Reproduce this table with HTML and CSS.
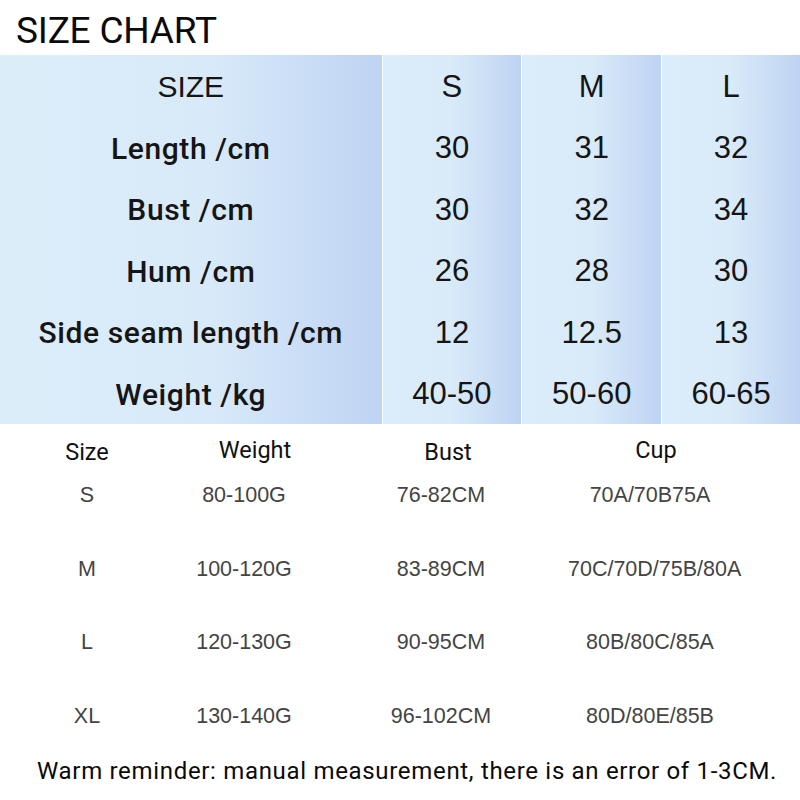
FILE: index.html
```html
<!DOCTYPE html>
<html>
<head>
<meta charset="utf-8">
<link rel="stylesheet" href="styles.css">
</head>
<body>
<div class="page">
  <h1 class="title">SIZE CHART</h1>
  <div class="chart">
    <div class="col col-label">
      <div class="cell head">SIZE</div>
      <div class="cell label">Length /cm</div>
      <div class="cell label">Bust /cm</div>
      <div class="cell label">Hum /cm</div>
      <div class="cell label">Side seam length /cm</div>
      <div class="cell label">Weight /kg</div>
    </div>
    <div class="col col-size">
      <div class="cell">S</div>
      <div class="cell">30</div>
      <div class="cell">30</div>
      <div class="cell">26</div>
      <div class="cell">12</div>
      <div class="cell">40-50</div>
    </div>
    <div class="col col-size">
      <div class="cell">M</div>
      <div class="cell">31</div>
      <div class="cell">32</div>
      <div class="cell">28</div>
      <div class="cell">12.5</div>
      <div class="cell">50-60</div>
    </div>
    <div class="col col-size col-last">
      <div class="cell">L</div>
      <div class="cell">32</div>
      <div class="cell">34</div>
      <div class="cell">30</div>
      <div class="cell">13</div>
      <div class="cell">60-65</div>
    </div>
  </div>
  <div class="bra">
    <div class="bra-row bra-head">
      <div class="c1 h-size">Size</div>
      <div class="c2 h-weight">Weight</div>
      <div class="c3 h-bust">Bust</div>
      <div class="c4 h-cup">Cup</div>
    </div>
    <div class="bra-row bra-val">
      <div class="c1">S</div>
      <div class="c2">80-100G</div>
      <div class="c3">76-82CM</div>
      <div class="c4">70A/70B75A</div>
    </div>
    <div class="bra-row bra-val">
      <div class="c1">M</div>
      <div class="c2">100-120G</div>
      <div class="c3">83-89CM</div>
      <div class="c4">70C/70D/75B/80A</div>
    </div>
    <div class="bra-row bra-val">
      <div class="c1">L</div>
      <div class="c2">120-130G</div>
      <div class="c3">90-95CM</div>
      <div class="c4">80B/80C/85A</div>
    </div>
    <div class="bra-row bra-val">
      <div class="c1">XL</div>
      <div class="c2">130-140G</div>
      <div class="c3">96-102CM</div>
      <div class="c4">80D/80E/85B</div>
    </div>
  </div>
  <p class="note">Warm reminder: manual measurement, there is an error of 1-3CM.</p>
</div>
</body>
</html>
```

FILE: styles.css
```css
html, body {
  margin: 0;
  padding: 0;
  background: #ffffff;
}

.page {
  width: 800px;
  height: 800px;
  overflow: hidden;
  color: #111111;
  font-family: Roboto, "Liberation Sans", sans-serif;
}

.title {
  margin: 0;
  height: 55px;
  box-sizing: border-box;
  padding: 11px 0 0 16px;
  font-size: 37px;
  font-weight: 400;
  line-height: 40px;
  color: #0a0a0a;
  letter-spacing: -0.2px;
}

.chart {
  display: flex;
  height: 369px;
}

.col {
  display: flex;
  flex-direction: column;
  background: linear-gradient(to right, #dbedfa 0%, #d9ebf9 50%, #bed3f3 100%);
}

.col-label {
  width: 382px;
  margin-right: 1px;
  background: linear-gradient(to right, #dcedfa 0%, #d8eaf9 55%, #bfd3f3 100%);
}

.col-size {
  width: 139px;
  margin-right: 1px;
  font-family: "Liberation Sans", Arial, sans-serif;
}

.col-last {
  width: 138px;
  margin-right: 0;
}

.cell {
  flex: 1;
  display: flex;
  align-items: center;
  justify-content: center;
  font-size: 31px;
  color: #151515;
  padding-top: 2px;
}

.col-label .head {
  font-family: "Liberation Sans", Arial, sans-serif;
  font-size: 30px;
  font-weight: 400;
}

.label {
  font-family: Roboto, sans-serif;
  font-weight: 500;
  font-size: 30px;
  letter-spacing: 0.6px;
}

.bra {
  display: flex;
  flex-direction: column;
}

.bra-row {
  display: grid;
  grid-template-columns: 174px 140px 254px 164px;
  text-align: center;
}

.bra-head {
  height: 52px;
  align-items: center;
  font-family: Roboto, sans-serif;
  font-size: 23.5px;
  color: #111111;
}

.h-weight { padding-left: 22px; }
.h-bust { padding-left: 14px; padding-top: 4px; }
.h-cup { padding-left: 12px; }
.h-size { padding-top: 4px; }

.bra-val {
  height: 38px;
  line-height: 38px;
  margin-bottom: 35.7px;
  font-family: "Liberation Sans", Arial, sans-serif;
  font-size: 21.5px;
  color: #444444;
}

.bra-val:last-child {
  margin-bottom: 0;
}

.note {
  margin: 15px 0 0 0;
  padding-left: 37px;
  line-height: 42px;
  font-family: Roboto, sans-serif;
  font-size: 24px;
  letter-spacing: 0.68px;
  color: #0a0a0a;
  white-space: nowrap;
}
```
